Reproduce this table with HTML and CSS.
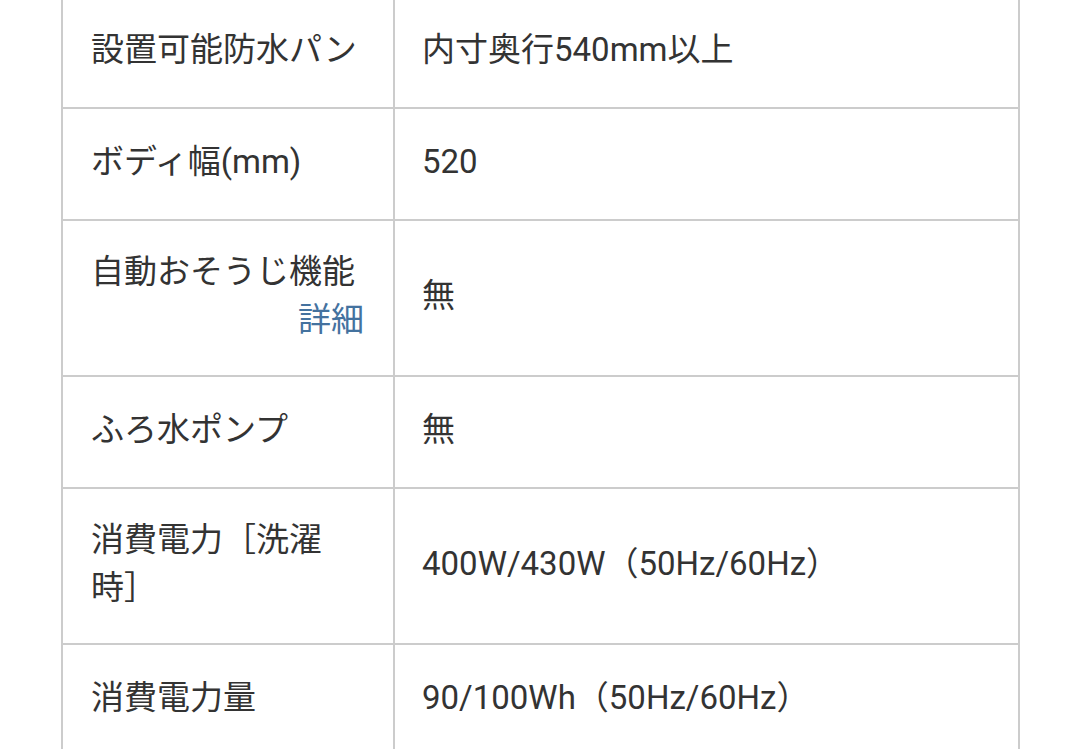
FILE: index.html
```html
<!DOCTYPE html>
<html lang="ja">
<head>
<meta charset="utf-8">
<link rel="stylesheet" href="styles.css">
</head>
<body>
<table class="spec">
  <tbody>
    <tr class="row">
      <th class="label">設置可能防水パン</th>
      <td class="value">内寸奥行540mm以上</td>
    </tr>
    <tr class="row">
      <th class="label">ボディ幅(mm)</th>
      <td class="value">520</td>
    </tr>
    <tr class="row">
      <th class="label">自動おそうじ機能<a class="detail" href="#">詳細</a></th>
      <td class="value">無</td>
    </tr>
    <tr class="row">
      <th class="label">ふろ水ポンプ</th>
      <td class="value">無</td>
    </tr>
    <tr class="row">
      <th class="label">消費電力［洗濯時］</th>
      <td class="value">400W/430W（50Hz/60Hz）</td>
    </tr>
    <tr class="row">
      <th class="label">消費電力量</th>
      <td class="value">90/100Wh（50Hz/60Hz）</td>
    </tr>
  </tbody>
</table>
</body>
</html>
```
FILE: styles.css
```css
html, body {
  margin: 0;
  padding: 0;
  background: #ffffff;
  overflow: hidden;
}

body {
  font-family: Roboto, "Noto Sans CJK JP", sans-serif;
  color: #333333;
}

.spec {
  margin: -3px 0 0 61px;
  width: 959px;
  table-layout: fixed;
  border-collapse: separate;
  border-spacing: 0;
  font-size: 33px;
  line-height: 48px;
}

.row {
  height: 112px;
}

.label,
.value {
  box-sizing: border-box;
  font-weight: 400;
  text-align: left;
  vertical-align: middle;
  border-bottom: 2px solid #cccccc;
  border-right: 2px solid #cccccc;
}

.label {
  width: 334px;
  padding: 27px 29px 31px 28px;
  border-left: 2px solid #cccccc;
}

.value {
  width: 625px;
  padding: 27px 28px 31px 27px;
}

.detail {
  display: block;
  text-align: right;
  color: #44729f;
  text-decoration: none;
}
```
